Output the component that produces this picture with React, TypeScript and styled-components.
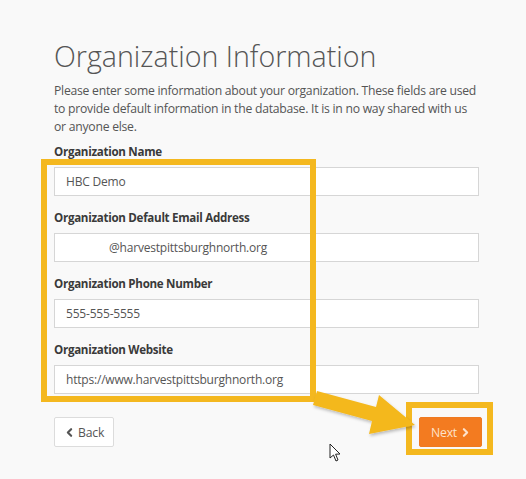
import React from "react";
import styled, { createGlobalStyle } from "styled-components";
import { ChevronLeft, ChevronRight } from "lucide-react";

const GlobalStyle = createGlobalStyle`
  html, body {
    margin: 0;
    padding: 0;
    background: #f9f9f9;
  }
  body {
    font-family: "Open Sans", "Noto Sans", Arial, sans-serif;
  }
`;

const Page = styled.div`
  position: relative;
  width: 526px;
  height: 479px;
  overflow: hidden;
  background: #f9f9f9;
`;

const Content = styled.div`
  width: 425px;
  padding: 36px 0 0 54px;
  display: flex;
  flex-direction: column;
`;

const Title = styled.h1`
  margin: 0;
  font-size: 28.6px;
  font-weight: 300;
  color: #555;
  line-height: 40px;
`;

const Intro = styled.p`
  margin: 6px 0 0;
  font-size: 12.2px;
  letter-spacing: -0.25px;
  line-height: 18px;
  color: #555;
`;

const Field = styled.div<{ first?: boolean }>`
  display: flex;
  flex-direction: column;
  margin-top: ${(p) => (p.first ? "8px" : "14px")};
`;

const Label = styled.label`
  font-size: 11.6px;
  font-weight: 700;
  letter-spacing: -0.3px;
  color: #3a3a3a;
  line-height: 16px;
  margin-bottom: 7px;
`;

const Input = styled.div<{ indent?: number }>`
  box-sizing: border-box;
  height: 29px;
  background: #fff;
  border: 1px solid #d6d6d6;
  padding-left: ${(p) => 11 + (p.indent || 0)}px;
  display: flex;
  align-items: center;
  font-size: 12px;
  letter-spacing: -0.2px;
  color: #555;
`;

const Actions = styled.div`
  display: flex;
  justify-content: space-between;
  margin-top: 23px;
`;

const Button = styled.button<{ primary?: boolean }>`
  box-sizing: border-box;
  height: 30px;
  padding: ${(p) => (p.primary ? "0 9px 0 11px" : "0 9px 0 8px")};
  display: flex;
  align-items: center;
  gap: 2px;
  font-family: inherit;
  font-size: 12.2px;
  letter-spacing: -0.2px;
  border-radius: 2px;
  border: 1px solid ${(p) => (p.primary ? "#ee7a22" : "#dcdcdc")};
  background: ${(p) => (p.primary ? "#f37b20" : "#fff")};
  color: ${(p) => (p.primary ? "#fde2cb" : "#555")};
  margin-right: ${(p) => (p.primary ? "-3px" : "0")};
`;

const Highlight = styled.div<{ x: number; y: number; w: number; h: number }>`
  position: absolute;
  left: ${(p) => p.x}px;
  top: ${(p) => p.y}px;
  width: ${(p) => p.w}px;
  height: ${(p) => p.h}px;
  box-sizing: border-box;
  border: 6px solid #f4b81f;
  pointer-events: none;
`;

const Overlay = styled.svg`
  position: absolute;
  left: 0;
  top: 0;
  pointer-events: none;
`;

export default function App() {
  return (
    <Page>
      <GlobalStyle />
      <Content>
        <Title>Organization Information</Title>
        <Intro>
          Please enter some information about your organization. These fields are used
          to provide default information in the database. It is in no way shared with us
          or anyone else.
        </Intro>
        <Field first>
          <Label>Organization Name</Label>
          <Input>HBC Demo</Input>
        </Field>
        <Field>
          <Label>Organization Default Email Address</Label>
          <Input indent={43}>@harvestpittsburghnorth.org</Input>
        </Field>
        <Field>
          <Label>Organization Phone Number</Label>
          <Input>555-555-5555</Input>
        </Field>
        <Field>
          <Label>Organization Website</Label>
          <Input>https://www.harvestpittsburghnorth.org</Input>
        </Field>
        <Actions>
          <Button>
            <ChevronLeft size={13} strokeWidth={4} />
            Back
          </Button>
          <Button primary>
            Next
            <ChevronRight size={13} strokeWidth={4} />
          </Button>
        </Actions>
      </Content>

      <Highlight x={41} y={159} w={275} h={243} />
      <Highlight x={406} y={402} w={87} h={53} />

      <Overlay width={526} height={479}>
        <defs>
          <filter id="sh" x="-20%" y="-20%" width="140%" height="140%">
            <feDropShadow dx="1" dy="2" stdDeviation="1.5" floodColor="#000" floodOpacity="0.25" />
          </filter>
        </defs>
        <polygon
          points="317,391 376,407 379,395 415,425 369,434 372,421 313,405"
          fill="#f4b81f"
          filter="url(#sh)"
        />
        <path
          d="M330 444 L330 458 L333.5 455 L336 461 L338 460 L335.6 454.2 L340 454 Z"
          fill="#fff"
          stroke="#222"
          strokeWidth="1"
          strokeLinejoin="round"
        />
      </Overlay>
    </Page>
  );
}
